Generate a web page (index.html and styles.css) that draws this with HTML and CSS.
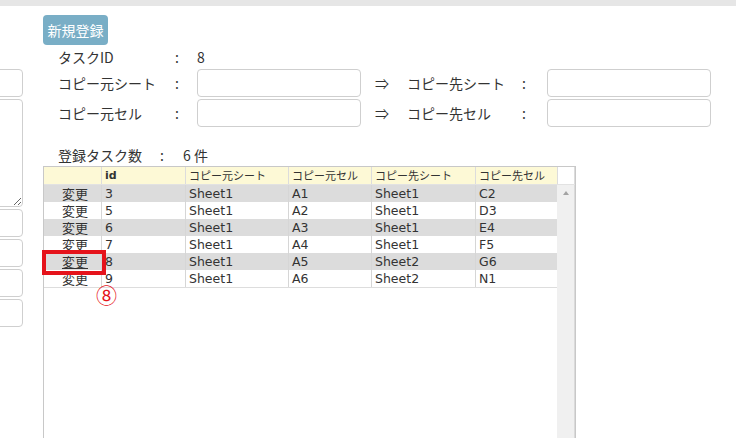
FILE: index.html
```html
<!DOCTYPE html>
<html lang="ja">
<head>
<meta charset="utf-8">
<link rel="stylesheet" href="styles.css">
</head>
<body>
<div class="strip"></div>
<div class="page">
  <div class="side">
    <input class="sinput" type="text">
    <textarea class="sarea"></textarea>
    <input class="sinput" type="text">
    <input class="sinput" type="text">
    <input class="sinput" type="text">
    <input class="sinput" type="text">
  </div>
  <div class="main">
    <button class="btn">新規登録</button>
    <div class="form">
      <div class="lbl">タスクID</div><div class="colon">:</div><div class="val">8</div>
      <div class="spacer"></div>
      <div class="lbl">コピー元シート</div><div class="colon">:</div><input class="finput" type="text">
      <div class="arrow">⇒</div><div class="lbl">コピー先シート</div><div class="colon">:</div><input class="finput" type="text">
      <div class="lbl">コピー元セル</div><div class="colon">:</div><input class="finput" type="text">
      <div class="arrow">⇒</div><div class="lbl">コピー先セル</div><div class="colon">:</div><input class="finput" type="text">
    </div>
    <div class="count"><span class="clbl">登録タスク数</span><span class="ccolon">:</span><span>6 件</span></div>
    <div class="grid">
      <div class="head">
        <div class="hc"></div>
        <div class="hc bold">id</div>
        <div class="hc">コピー元シート</div>
        <div class="hc">コピー元セル</div>
        <div class="hc">コピー先シート</div>
        <div class="hc">コピー先セル</div>
        <div class="hc blank"></div>
      </div>
      <div class="body">
        <div class="rows">
          <div class="row alt"><div class="c edit">変更</div><div class="c">3</div><div class="c">Sheet1</div><div class="c">A1</div><div class="c">Sheet1</div><div class="c">C2</div></div>
          <div class="row"><div class="c edit">変更</div><div class="c">5</div><div class="c">Sheet1</div><div class="c">A2</div><div class="c">Sheet1</div><div class="c">D3</div></div>
          <div class="row alt"><div class="c edit">変更</div><div class="c">6</div><div class="c">Sheet1</div><div class="c">A3</div><div class="c">Sheet1</div><div class="c">E4</div></div>
          <div class="row"><div class="c edit">変更</div><div class="c">7</div><div class="c">Sheet1</div><div class="c">A4</div><div class="c">Sheet1</div><div class="c">F5</div></div>
          <div class="row alt"><div class="c edit hover">変更</div><div class="c">8</div><div class="c">Sheet1</div><div class="c">A5</div><div class="c">Sheet2</div><div class="c">G6</div></div>
          <div class="row last"><div class="c edit">変更</div><div class="c">9</div><div class="c">Sheet1</div><div class="c">A6</div><div class="c">Sheet2</div><div class="c">N1</div></div>
        </div>
        <div class="scroll"><span class="up"></span></div>
      </div>
      <div class="mark"></div>
      <div class="num">⑧</div>
    </div>
  </div>
</div>
</body>
</html>
```
FILE: styles.css
```css
* { box-sizing: border-box; }
html, body { margin: 0; padding: 0; background: #fff; overflow: hidden; }
body {
  width: 736px; height: 438px;
  font-family: "Noto Sans CJK JP", "Noto Sans", sans-serif;
  color: #333;
}
.strip { height: 6px; background: #e6e6e6; }
.page { display: flex; }
.side {
  width: 23px; overflow: hidden;
  display: flex; flex-direction: column; align-items: flex-end;
  gap: 2px; padding-top: 63px;
}
.sinput, .sarea {
  flex: none;
  width: 120px; height: 28px;
  border: 1px solid #cfcfcf; border-radius: 4px;
  background: #fff; margin: 0; padding: 0;
  outline: none;
}
.sarea { height: 108px; resize: both; display: block; }
.main { margin-left: 20px; padding-top: 9px; }
.btn {
  display: block;
  width: 65px; height: 30px;
  border: none; border-radius: 4px;
  background: #79aec6; color: #fff;
  font-family: "Noto Sans CJK JP", sans-serif;
  font-size: 14px; padding: 0; line-height: 30px;
}
.form {
  display: grid;
  grid-template-columns: 118px 21px 164px 46px 116px 24px 164px;
  grid-template-rows: 20px 28px 28px;
  row-gap: 2px;
  margin: 2px 0 0 15px;
  font-size: 14px;
}
.lbl, .colon, .val, .arrow { line-height: 28px; white-space: nowrap; }
.form > div:nth-child(-n+3) { line-height: 20px; }
.spacer { grid-column: 4 / 8; }
.colon { margin-left: -1px; }
.arrow { padding-left: 14px; }
.finput {
  width: 164px; height: 28px; margin: 0;
  border: 1px solid #cfcfcf; border-radius: 4px;
  background: #fff;
}
.count {
  display: flex; margin: 18px 0 0 15px;
  font-size: 14px; line-height: 20px; height: 20px;
}
.clbl { width: 102px; }
.ccolon { width: 23px; }
.grid {
  position: relative;
  margin-top: 1px;
  width: 533px; height: 290px;
  border: 1px solid #c8c8c8;
  display: flex; flex-direction: column;
}
.head {
  display: grid;
  grid-template-columns: 57px 84px 103px 83px 104px 82px 18px;
  height: 18px;
  border-bottom: 1px solid #e2e2e2;
}
.hc {
  background: #fdf9d6;
  font-size: 11px; line-height: 17px;
  padding-left: 3px;
  border-left: 1px solid #dcdcdc;
  white-space: nowrap; overflow: hidden;
}
.hc:first-child { border-left: none; }
.hc.bold { font-family: "DejaVu Sans", sans-serif; font-weight: bold; font-size: 11px; }
.hc.blank { background: #fff; border-right: 1px solid #dcdcdc; }
.body { display: flex; flex: 1; }
.rows { width: 513px; align-self: flex-start; border-bottom: 1px solid #dddddd; }
.row {
  display: grid;
  grid-template-columns: 57px 84px 103px 83px 104px 82px;
  height: 17px;
  background: #fff;
  overflow: hidden;
}
.row.alt { background: #dcdcdc; }
.c {
  font-family: "DejaVu Sans", sans-serif;
  font-size: 12.5px; line-height: 17px; height: 17px;
  padding-left: 3px;
  border-left: 1px solid #d6d6d6;
  white-space: nowrap; overflow: hidden;
}
.c.edit {
  border-left: none; text-align: center;
  font-family: "Noto Sans CJK JP", sans-serif; font-size: 13px;
  padding-left: 5px;
}
.c.hover { text-decoration: underline; }
.scroll {
  width: 18px; margin-left: 0;
  background: #f0f0f0;
  border-right: 1px solid #dadada;
  position: relative;
}
.up {
  position: absolute; left: 6px; top: 6px;
  width: 0; height: 0;
  border-left: 3.5px solid transparent;
  border-right: 3.5px solid transparent;
  border-bottom: 4px solid #a3a3a3;
}
.mark {
  position: absolute; left: -2px; top: 83px;
  width: 64px; height: 25px;
  border: 4px solid #e5131b;
}
.num {
  position: absolute; left: 52px; top: 117px;
  font-size: 21px; line-height: 21px;
  color: #e5131b;
}
```
